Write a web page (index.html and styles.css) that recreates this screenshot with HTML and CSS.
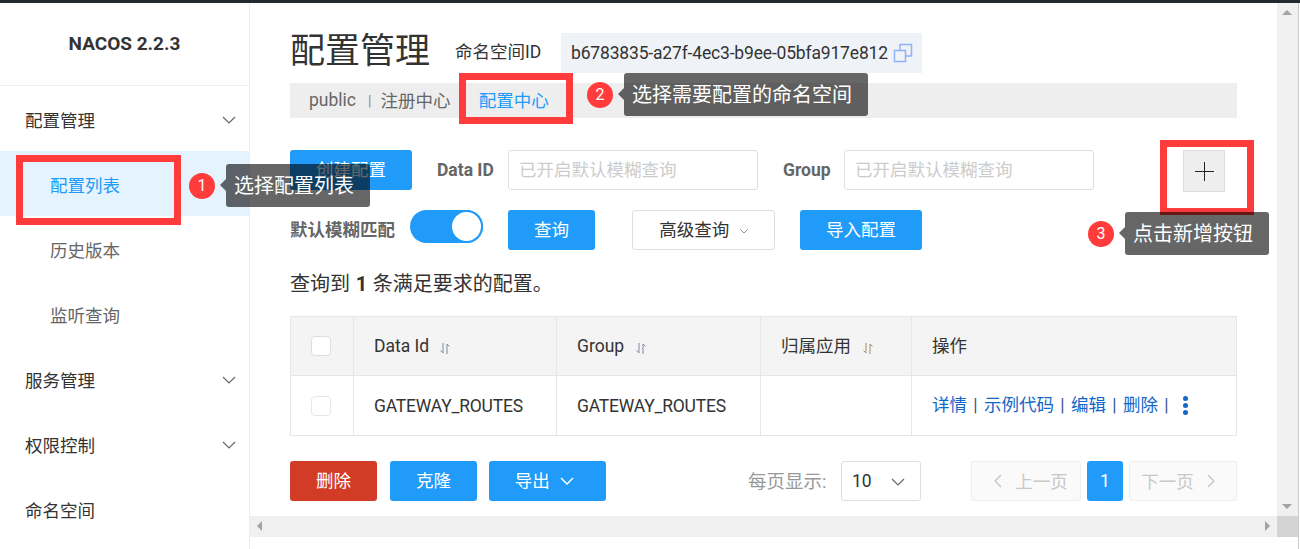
FILE: index.html
```html
<!DOCTYPE html>
<html lang="zh-CN">
<head>
  <meta charset="UTF-8">
  <title>NACOS 2.2.3</title>
  <link rel="stylesheet" href="styles.css">
</head>
<body>
  <div class="page">
    <div class="topbar"></div>
    <div class="shell">

      <aside class="sidebar">
        <div class="logo">NACOS 2.2.3</div>
        <nav class="nav">
          <div class="nav-item">配置管理
            <svg class="chev" viewBox="0 0 14 8"><path d="M1 1l6 6 6-6"/></svg>
          </div>
          <div class="nav-item sub active">配置列表</div>
          <div class="nav-item sub">历史版本</div>
          <div class="nav-item sub">监听查询</div>
          <div class="nav-item">服务管理
            <svg class="chev" viewBox="0 0 14 8"><path d="M1 1l6 6 6-6"/></svg>
          </div>
          <div class="nav-item">权限控制
            <svg class="chev" viewBox="0 0 14 8"><path d="M1 1l6 6 6-6"/></svg>
          </div>
          <div class="nav-item">命名空间</div>
        </nav>
      </aside>

      <div class="right">
        <div class="view">
          <main class="main">
            <div class="title-row">
              <h1>配置管理</h1>
              <span class="ns-label">命名空间ID</span>
              <span class="ns-id">b6783835-a27f-4ec3-b9ee-05bfa917e812
                <svg class="copy" viewBox="0 0 20 20"><path d="M1.5 7.5h11v11h-11z"/><path d="M7 7V1.500h11.500V13H13"/></svg>
              </span>
            </div>

            <div class="crumbs">
              <span>public</span><i>|</i><span>注册中心</span><i>|</i><span class="on">配置中心</span>
            </div>

            <div class="filters">
              <button class="btn w122">创建配置</button>
              <label class="lbl first">Data ID</label>
              <input class="txt" placeholder="已开启默认模糊查询">
              <label class="lbl second">Group</label>
              <input class="txt" placeholder="已开启默认模糊查询">
              <button class="plus"><svg viewBox="0 0 19 19"><path d="M9.500 0v19M0 9.500h19"/></svg></button>
            </div>

            <div class="filters row2">
              <label class="lbl bold-cn">默认模糊匹配</label>
              <span class="switch"><span class="knob"></span></span>
              <button class="btn w87 query">查询</button>
              <button class="btn ghost">高级查询
                <svg class="tiny" viewBox="0 0 8 5"><path d="M.5.500L4 4 7.500.500"/></svg>
              </button>
              <button class="btn w122 import">导入配置</button>
            </div>

            <p class="count">查询到 <b>1</b> 条满足要求的配置。</p>

            <table class="grid">
              <colgroup>
                <col class="c1"><col class="c2"><col class="c3"><col class="c4"><col>
              </colgroup>
              <thead>
                <tr>
                  <th class="chk"><span class="box"></span></th>
                  <th>Data Id <svg class="sort" viewBox="0 0 10 11"><path d="M3 0v10L.5 7.500M7 11V1l2.500 2.500"/></svg></th>
                  <th>Group <svg class="sort wide" viewBox="0 0 10 11"><path d="M3 0v10L.5 7.500M7 11V1l2.500 2.500"/></svg></th>
                  <th class="cn">归属应用 <svg class="sort wide warm" viewBox="0 0 10 11"><path d="M3 0v10L.5 7.500M7 11V1l2.500 2.500"/></svg></th>
                  <th class="cn">操作</th>
                </tr>
              </thead>
              <tbody>
                <tr>
                  <td class="chk"><span class="box light"></span></td>
                  <td class="code">GATEWAY_ROUTES</td>
                  <td class="code">GATEWAY_ROUTES</td>
                  <td></td>
                  <td class="ops"><a>详情</a> | <a>示例代码</a> | <a>编辑</a> | <a>删除</a> | <span class="dots"><em></em><em></em><em></em></span></td>
                </tr>
              </tbody>
            </table>

            <div class="footer">
              <button class="btn w87 danger">删除</button>
              <button class="btn w87">克隆</button>
              <button class="btn export">导出
                <svg class="chev-w" viewBox="0 0 14 8"><path d="M1 1l6 6 6-6"/></svg>
              </button>
              <div class="pager">
                <span class="per">每页显示:</span>
                <span class="select">10<svg class="chev sel" viewBox="0 0 14 8"><path d="M1 1l6 6 6-6"/></svg></span>
                <span class="pg prev"><svg viewBox="0 0 8 14"><path d="M7 1L1 7l6 6"/></svg>上一页</span>
                <span class="pg cur">1</span>
                <span class="pg next">下一页<svg viewBox="0 0 8 14"><path d="M1 1l6 6-6 6"/></svg></span>
              </div>
            </div>
          </main>
          <div class="vbar">
            <span class="arr up"></span>
            <span class="arr down"></span>
          </div>
        </div>
        <div class="hbar">
          <span class="arr left"></span>
          <span class="arr rgt"></span>
          <span class="corner"></span>
        </div>
      </div>
    </div>

    <!-- annotations drawn over the screenshot -->
    <div class="mark m1"></div>
    <div class="mark m2"></div>
    <div class="mark m3"></div>

    <div class="note n1"><span class="num">1</span><span class="tip">选择配置列表</span></div>
    <div class="note n2"><span class="num">2</span><span class="tip">选择需要配置的命名空间</span></div>
    <div class="note n3"><span class="num">3</span><span class="tip">点击新增按钮</span></div>
  </div>
</body>
</html>
```

FILE: styles.css
```css
:root {
  --blue: #209bfa;
  --text: #333333;
  --line: #e6e6e6;
  --link: #1267c9;
  --font: Roboto, "Noto Sans CJK SC", sans-serif;
}

* {
  box-sizing: border-box;
}

html, body {
  margin: 0;
  height: 100%;
  overflow: hidden;
  background: #fff;
}

body {
  font-family: var(--font);
  font-size: 17.5px;
  color: var(--text);
}

.page {
  position: relative;
  width: 1300px;
  height: 549px;
  overflow: hidden;
}

.topbar {
  height: 3px;
  background: #222a33;
}

.shell {
  display: flex;
  height: 546px;
}

/* sidebar */
.sidebar {
  width: 250px;
  flex: none;
  border-right: 1px solid #eeeeee;
}

.logo {
  height: 83px;
  border-bottom: 1px solid #eeeeee;
  display: flex;
  align-items: center;
  justify-content: center;
  font-weight: 700;
  font-size: 19px;
  padding-bottom: 1px;
}

.nav-item {
  position: relative;
  height: 65px;
  line-height: 71px;
  padding-left: 25px;
}

.nav-item.sub {
  padding-left: 50px;
  color: #666;
}

.nav-item.active {
  color: var(--blue);
  background: #e4f3fe;
}

.chev {
  position: absolute;
  right: 13px;
  top: 30px;
  width: 14px;
  height: 8px;
  fill: none;
  stroke: #666;
  stroke-width: 1.200;
}

/* main column */
.right {
  width: 1049px;
  display: flex;
  flex-direction: column;
  border-right: 1px solid #cccccc;
}

.view {
  display: flex;
  height: 513px;
}

.main {
  width: 1027px;
  padding: 30px 40px 0;
}

.title-row {
  display: flex;
  align-items: center;
  height: 40px;
}

h1 {
  margin: 0 0 3px;
  font-size: 35px;
  line-height: 40px;
  font-weight: 400;
  width: 165px;
}

.ns-label {
  width: 106px;
  margin-bottom: 5px;
}

.ns-id {
  display: flex;
  align-items: center;
  width: 361px;
  height: 40px;
  padding-left: 10px;
  background: #eff3f8;
  white-space: nowrap;
  letter-spacing: -0.17px;
}

.copy {
  width: 20px;
  height: 20px;
  margin-left: 5px;
  fill: none;
  stroke: #8fb0fb;
  stroke-width: 1.500;
}

.crumbs {
  height: 35px;
  margin-top: 10px;
  padding-left: 19px;
  display: flex;
  align-items: center;
  background: #eeeeee;
  color: #666;
}

.crumbs span {
  margin-top: -2px;
}

.crumbs i {
  font-style: normal;
  font-size: 14px;
  margin: 0 9px 0 12px;
  color: #888;
}

.crumbs .on {
  color: var(--blue);
  margin-left: 4px;
}

/* filter rows */
.filters {
  display: flex;
  align-items: flex-start;
  margin-top: 32px;
  height: 42px;
}

.filters.row2 {
  margin-top: 18px;
  height: 40px;
}

.btn {
  height: 40px;
  padding: 0 0 3px;
  border: 0;
  border-radius: 3px;
  font-family: inherit;
  font-size: 17.5px;
  color: #fff;
  background: var(--blue);
}

.w122 { width: 122px; }
.w87 { width: 87px; }

.lbl {
  line-height: 40px;
  font-weight: 700;
  color: #666;
}

.lbl.first {
  margin-left: 25px;
  width: 71px;
}

.lbl.second {
  margin-left: 25px;
  width: 61px;
}

.bold-cn {
  width: 120px;
}

.txt {
  width: 250px;
  height: 40px;
  padding: 0 10px;
  border: 1px solid #dcdee3;
  border-radius: 3px;
  font-family: inherit;
  font-size: 17.5px;
  outline: none;
}

.txt::placeholder {
  color: #cccccc;
}

.plus {
  margin-left: 89px;
  width: 42px;
  height: 42px;
  padding: 0;
  display: flex;
  align-items: center;
  justify-content: center;
  background: #eeeeee;
  border: 1px solid #dddddd;
}

.plus svg {
  width: 19px;
  height: 19px;
  stroke: #222;
  stroke-width: 1;
}

.switch {
  display: flex;
  justify-content: flex-end;
  width: 73px;
  height: 33px;
  border-radius: 17px;
  background: var(--blue);
}

.knob {
  width: 33px;
  height: 33px;
  border-radius: 50%;
  background: #fff;
  border: 2px solid var(--blue);
}

.query {
  margin-left: 25px;
}

.ghost {
  width: 143px;
  margin-left: 37px;
  color: var(--text);
  background: #fff;
  border: 1px solid #dcdee3;
}

.tiny {
  width: 8px;
  height: 5px;
  margin-left: 6px;
  vertical-align: 2px;
  fill: none;
  stroke: #888;
}

.import {
  margin-left: 25px;
}

.count {
  margin: 21px 0 0;
  height: 25px;
  line-height: 27px;
  font-size: 20px;
  word-spacing: 0.7px;
}

/* table */
.grid {
  width: 947px;
  margin-top: 20px;
  border-collapse: collapse;
  table-layout: fixed;
  border: 1px solid var(--line);
}

.c1 { width: 63px; }
.c2 { width: 203px; }
.c3 { width: 204px; }
.c4 { width: 151px; }

.grid th, .grid td {
  padding: 0 0 0 20px;
  border: 1px solid var(--line);
  text-align: left;
  font-weight: 400;
}

.grid th {
  height: 59px;
  background: #f4f4f4;
}

.grid th.cn {
  padding-bottom: 3px;
}

.grid td {
  height: 60px;
}

.grid .chk {
  padding-left: 20px;
}

.code {
  letter-spacing: -0.2px;
}

.box {
  display: block;
  width: 20px;
  height: 20px;
  border: 1px solid #dcdee3;
  border-radius: 4px;
  background: #fff;
}

.box.light {
  border-color: #e6e7ea;
}

.sort {
  width: 10px;
  height: 11px;
  margin-left: 6px;
  vertical-align: -2px;
  fill: none;
  stroke: #7c8a9c;
  stroke-width: 1;
}

.sort.wide {
  margin-left: 8px;
}

.sort.warm {
  stroke: #a08a70;
}

.grid .ops {
  padding-bottom: 5px;
  color: #33598c;
  white-space: nowrap;
  word-spacing: 2px;
}

.ops a {
  color: var(--link);
}

.dots {
  display: inline-flex;
  flex-direction: column;
  gap: 2px;
  margin-left: 8px;
  vertical-align: middle;
}

.dots em {
  width: 5px;
  height: 5px;
  border-radius: 50%;
  background: var(--link);
}

/* bottom row */
.footer {
  display: flex;
  margin-top: 25px;
  height: 40px;
}

.danger {
  background: #d23c26;
  margin-right: 13px;
}

.export {
  width: 117px;
  margin-left: 12px;
  padding-right: 6px;
}

.chev-w {
  width: 14px;
  height: 8px;
  margin-left: 6px;
  vertical-align: 2px;
  fill: none;
  stroke: #fff;
  stroke-width: 1.500;
}

.pager {
  display: flex;
  align-items: center;
  margin-left: auto;
}

.per {
  color: #999;
  width: 93px;
  padding-bottom: 3px;
  font-size: 18.5px;
  white-space: nowrap;
}

.select {
  position: relative;
  width: 80px;
  height: 40px;
  line-height: 38px;
  padding-left: 10px;
  border: 1px solid #dcdee3;
  border-radius: 3px;
  margin-right: 50px;
}

.chev.sel {
  right: 15px;
  top: 16px;
}

.pg {
  display: flex;
  align-items: center;
  justify-content: center;
  height: 40px;
  padding-bottom: 1px;
  border: 1px solid #eeeeee;
  border-radius: 3px;
  background: #fafafa;
  color: #c8c8c8;
}

.pg svg {
  width: 8px;
  height: 14px;
  fill: none;
  stroke: #c8c8c8;
  stroke-width: 1.500;
}

.prev {
  width: 110px;
  padding-left: 10px;
}

.prev svg {
  margin-right: 13px;
}

.next {
  width: 108px;
  padding-right: 10px;
}

.next svg {
  margin-left: 13px;
}

.cur {
  width: 36px;
  margin: 0 6px;
  border: 0;
  background: var(--blue);
  color: #fff;
}

/* scrollbars */
.vbar {
  position: relative;
  width: 21px;
  background: #f0f0f0;
}

.hbar {
  position: relative;
  width: 1048px;
  height: 21px;
  background: #f0f0f0;
}

.corner {
  position: absolute;
  right: 0;
  top: 0;
  width: 21px;
  height: 21px;
  background: #d4d4d4;
}

.arr {
  position: absolute;
  width: 0;
  height: 0;
  border: 5px solid transparent;
}

.up {
  left: 5px;
  top: 7px;
  border-top: 0;
  border-bottom-color: #a3a3a3;
}

.down {
  left: 5px;
  bottom: 7px;
  border-bottom: 0;
  border-top-color: #a3a3a3;
}

.left {
  left: 7px;
  top: 5px;
  border-left: 0;
  border-right-color: #a3a3a3;
}

.rgt {
  right: 28px;
  top: 5px;
  border-right: 0;
  border-left-color: #a3a3a3;
}

/* red marks and numbered notes */
.mark {
  position: absolute;
  border: 7px solid #ff3b3b;
}

.m1 { left: 16px; top: 155px; width: 165px; height: 70px; }
.m2 { left: 459px; top: 73px; width: 114px; height: 51px; }
.m3 { left: 1160px; top: 140px; width: 94px; height: 75px; }

.note {
  position: absolute;
  display: flex;
  align-items: center;
}

.n1 { left: 189px; top: 164px; }
.n2 { left: 587px; top: 73px; }
.n3 { left: 1088px; top: 212px; }

.num {
  width: 26px;
  height: 26px;
  line-height: 26px;
  border-radius: 50%;
  background: #ff3b3b;
  color: #fff;
  font-size: 16px;
  text-align: center;
  margin-right: 11px;
}

.tip {
  position: relative;
  height: 43px;
  line-height: 45px;
  padding: 0 16px 0 8px;
  border-radius: 3px;
  background: rgba(0, 0, 0, 0.6);
  color: #fff;
  font-size: 20px;
  white-space: nowrap;
}

.tip::before {
  content: "";
  position: absolute;
  left: -6px;
  top: 15px;
  border: 6px solid transparent;
  border-left: 0;
  border-right-color: rgba(0, 0, 0, 0.6);
}
```
